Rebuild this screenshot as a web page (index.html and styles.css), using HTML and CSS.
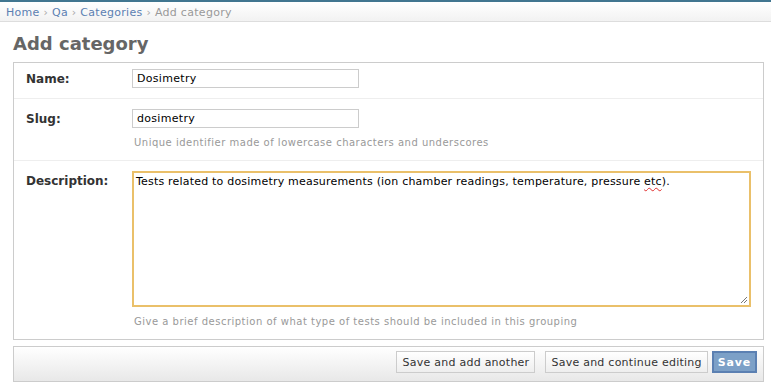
FILE: index.html
```html
<!DOCTYPE html>
<html lang="en">
<head>
    <meta charset="UTF-8">
    <title>Add category</title>
    <link rel="stylesheet" href="styles.css">
</head>
<body>
    <!-- Breadcrumbs -->
    <div class="breadcrumbs">
        <a href="#">Home</a> <span class="sep">›</span>
        <a href="#">Qa</a> <span class="sep">›</span>
        <a href="#">Categories</a> <span class="sep">›</span>
        <span class="current">Add category</span>
    </div>

    <div class="content">
        <h1>Add category</h1>

        <form>
            <fieldset class="module">
                <div class="form-row">
                    <label>Name:</label>
                    <div class="field">
                        <input type="text" class="text-input" value="Dosimetry">
                    </div>
                </div>
                <div class="form-row">
                    <label>Slug:</label>
                    <div class="field">
                        <input type="text" class="text-input" value="dosimetry">
                        <p class="help">Unique identifier made of lowercase characters and underscores</p>
                    </div>
                </div>
                <div class="form-row">
                    <label>Description:</label>
                    <div class="field">
                        <div class="textarea" contenteditable="true" spellcheck="false">Tests related to dosimetry measurements (ion chamber readings, temperature, pressure <span class="misspelled">etc</span>).<svg class="grip" viewBox="0 0 10 10"><path d="M9 3L3 9M9 6L6 9"></path></svg></div>
                        <p class="help">Give a brief description of what type of tests should be included in this grouping</p>
                    </div>
                </div>
            </fieldset>

            <div class="submit-row">
                <button type="button" class="btn">Save and add another</button>
                <button type="button" class="btn">Save and continue editing</button>
                <button type="button" class="btn default">Save</button>
            </div>
        </form>
    </div>
</body>
</html>
```

FILE: styles.css
```css
* {
    margin: 0;
    padding: 0;
    box-sizing: border-box;
}

body {
    font-family: 'DejaVu Sans', Verdana, sans-serif;
    font-size: 11px;
    letter-spacing: 0.3px;
    color: #333;
    background: #fff;
    border-top: 2px solid #417690;
}

a {
    color: #5b80b2;
    text-decoration: none;
}

/* Breadcrumbs */
.breadcrumbs {
    height: 20px;
    padding: 4px 6px 0;
    background: linear-gradient(#ffffff, #f2f2f2);
    border-bottom: 1px solid #ddd;
    color: #999;
    white-space: nowrap;
}

.breadcrumbs .sep {
    color: #aaa;
}

/* Content */
.content {
    padding: 11px 7px 0 13px;
}

h1 {
    font-size: 18px;
    font-weight: bold;
    letter-spacing: 0;
    color: #666;
    line-height: 22px;
    margin-bottom: 7px;
}

/* Fieldset */
.module {
    border: 1px solid #ccc;
    background: #fff;
}

.form-row {
    display: flex;
    padding: 10px 12px 11px;
    border-bottom: 1px solid #eee;
}

.form-row:first-child {
    padding-top: 6px;
    padding-bottom: 10px;
}

.form-row:last-child {
    border-bottom: none;
}

.form-row label {
    width: 106px;
    flex-shrink: 0;
    font-size: 12px;
    font-weight: bold;
    letter-spacing: 0;
    color: #333;
    padding-top: 3px;
}

.field {
    flex-grow: 1;
}

.text-input {
    display: block;
    width: 227px;
    height: 19px;
    border: 1px solid #ccc;
    padding: 0 4px;
    font-family: 'DejaVu Sans', Verdana, sans-serif;
    font-size: 11px;
    letter-spacing: 0.3px;
    color: #000;
    outline: none;
}

.textarea {
    position: relative;
    height: 136px;
    border: 2px solid #eac06a;
    padding: 2px 2px;
    font-size: 11px;
    line-height: 14px;
    letter-spacing: 0.2px;
    color: #000;
    outline: none;
    white-space: nowrap;
}

.misspelled {
    text-decoration: underline wavy #e03030;
    text-decoration-thickness: 1px;
    text-underline-offset: 2px;
}

.grip {
    position: absolute;
    right: 1px;
    bottom: 1px;
    width: 10px;
    height: 10px;
    stroke: #777;
    stroke-width: 1;
    fill: none;
}

.help {
    font-size: 10px;
    line-height: 12px;
    letter-spacing: 0.5px;
    color: #999;
    padding: 9px 0 0 2px;
}

/* Submit row */
.submit-row {
    display: flex;
    justify-content: flex-end;
    gap: 10px;
    margin-top: 6px;
    padding: 4px 6px 8px;
    border: 1px solid #ccc;
    background: linear-gradient(#ffffff, #e8e8e8);
}

.btn {
    height: 22px;
    padding: 0 5px;
    border: 1px solid #ccc;
    background: linear-gradient(#ffffff, #eeeeee);
    font-family: 'DejaVu Sans', Verdana, sans-serif;
    font-size: 11px;
    letter-spacing: 0.25px;
    color: #333;
    cursor: pointer;
}

.btn.default {
    margin-left: -6px;
    padding: 0 4px;
    border: 2px solid #5b80b2;
    background: #7ca0c7;
    color: #fff;
    font-weight: bold;
    letter-spacing: 0.8px;
}
```
